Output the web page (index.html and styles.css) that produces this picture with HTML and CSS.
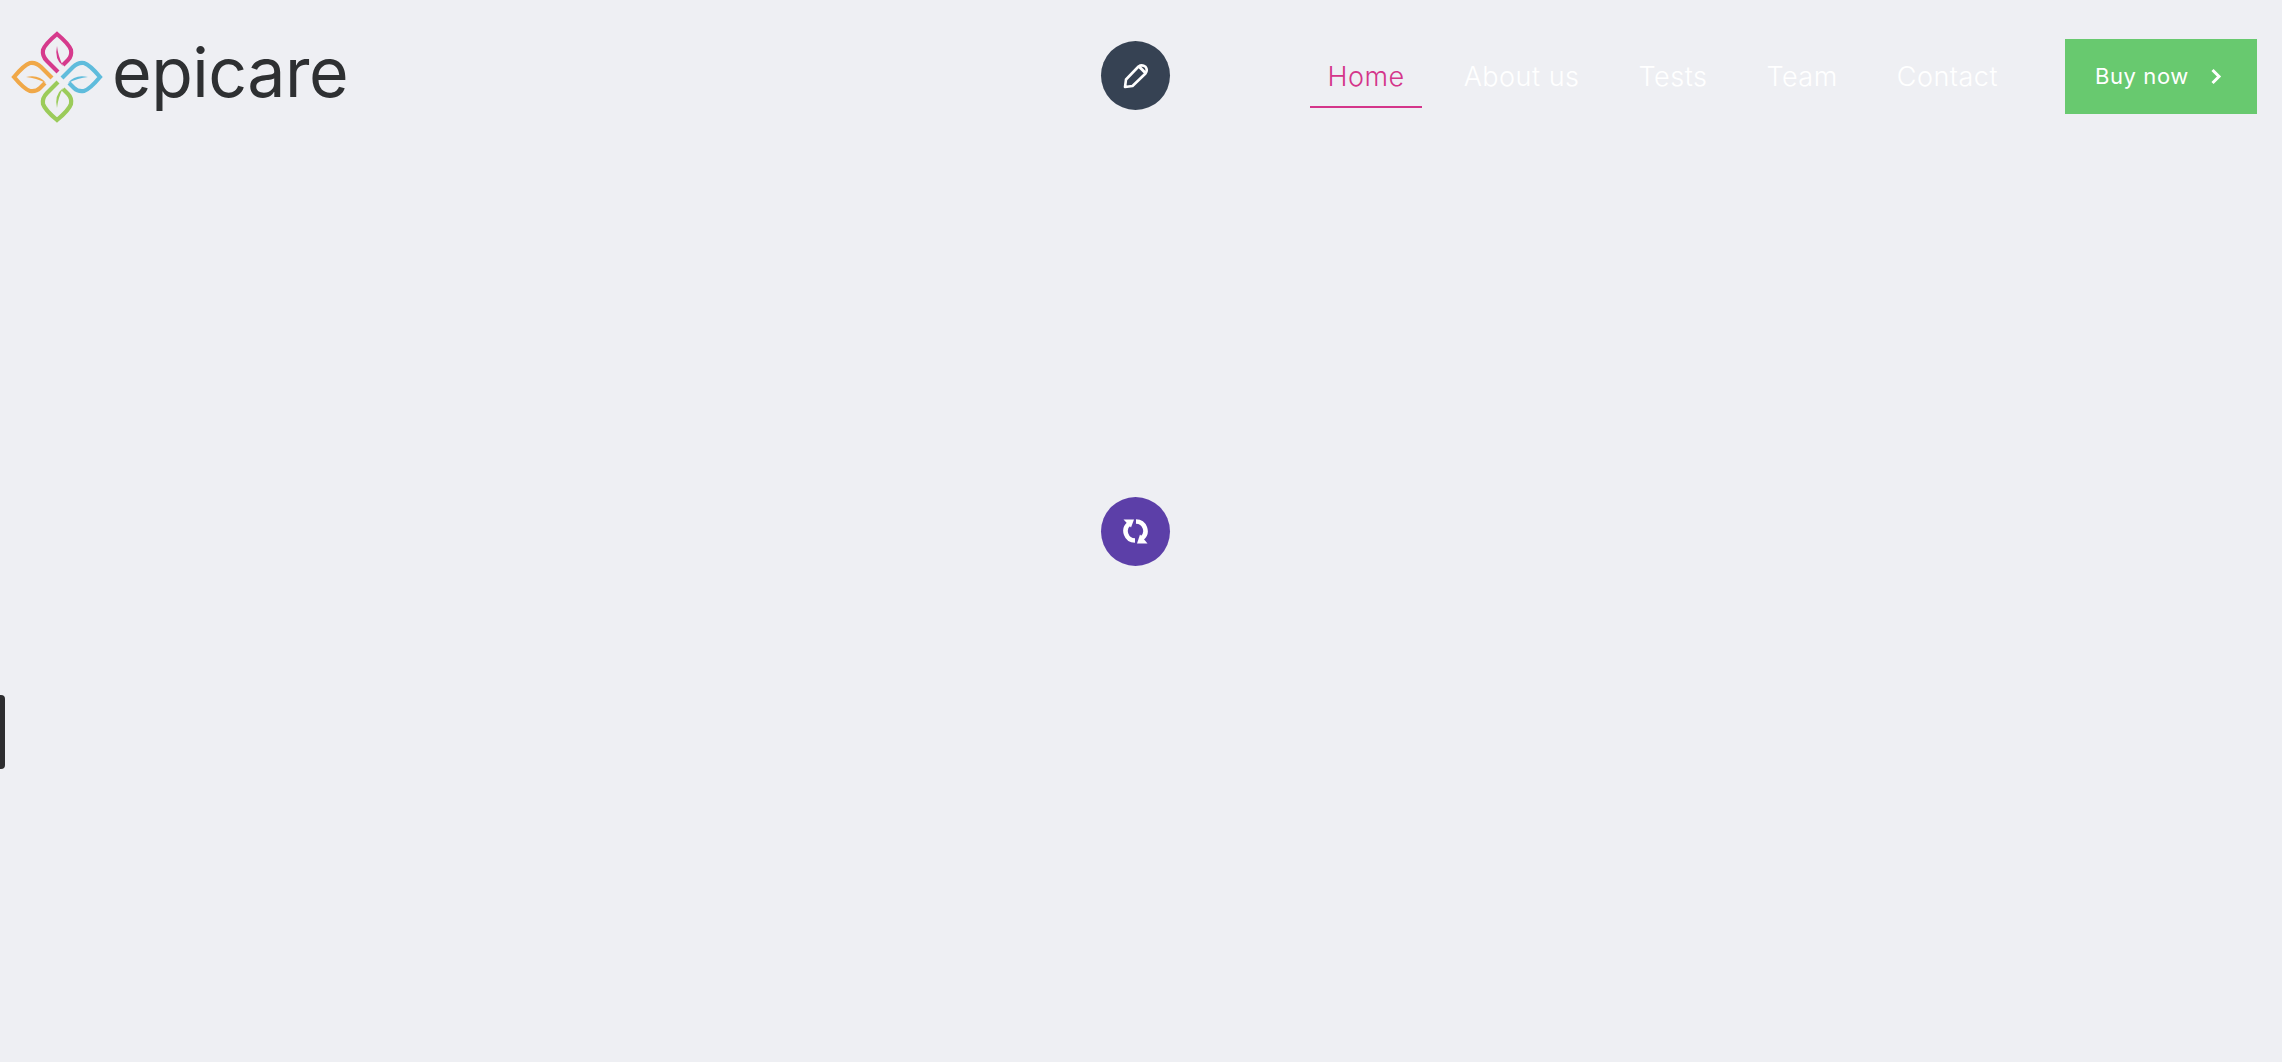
FILE: index.html
```html
<!DOCTYPE html>
<html>
  <head>
    <title>Epicare</title>
    <link rel="stylesheet" href="styles.css">
  </head>

  <body>
    <header class="header">
      <a class="logo" href="#">
        <svg class="logo-mark" viewBox="0 0 100 100" width="100" height="100">
          <defs>
            <g id="leaf">
              <path class="leaf-line" d="M1 -5 L-10 -16 Q-15 -21 -14 -27 Q-12 -33 0 -43 Q12 -33 14 -27 Q15 -21 11 -17 L6 -12"/>
              <path class="leaf-curl" d="M0 -31 Q-3 -18 6 -11 Q1 -21 0 -31 Z"/>
            </g>
          </defs>
          <g transform="translate(50 50)">
            <use href="#leaf" class="leaf-pink"/>
            <use href="#leaf" class="leaf-blue" transform="rotate(90)"/>
            <use href="#leaf" class="leaf-green" transform="scale(1 -1)"/>
            <use href="#leaf" class="leaf-orange" transform="matrix(0 1 1 0 0 0)"/>
          </g>
        </svg>
        <span class="logo-text">epicare</span>
      </a>

      <div class="header-right">
        <nav class="nav">
          <a class="nav-item active" href="#">Home</a>
          <a class="nav-item" href="#">About us</a>
          <a class="nav-item" href="#">Tests</a>
          <a class="nav-item" href="#">Team</a>
          <a class="nav-item" href="#">Contact</a>
        </nav>
        <a class="buy" href="#">
          <span>Buy now</span>
          <svg viewBox="0 0 12 17" width="12" height="17">
            <path d="M2.5 2 L9 8.5 L2.5 15" fill="none" stroke="#fff" stroke-width="3"/>
          </svg>
        </a>
      </div>
    </header>

    <!-- floating buttons -->
    <button class="round round-edit">
      <svg viewBox="0 0 26 26" width="26" height="26">
        <path d="M2 24 L3 16.5 L15.5 3.5 Q19 1 22.5 3.8 Q25 7 22.5 10.5 L9.5 23 Z" fill="none" stroke="#fff" stroke-width="2.6" stroke-linejoin="round"/>
        <path d="M16 3.5 L22.5 10" fill="none" stroke="#fff" stroke-width="3"/>
      </svg>
    </button>
    <button class="round round-reload">
      <svg viewBox="0 0 25 25" width="25" height="25">
        <path d="M12 21.5 A9.5 9.5 0 0 1 6 4.7" fill="none" stroke="#fff" stroke-width="4.6"/>
        <path d="M13 2.5 A9.5 9.5 0 0 1 19 19.3" fill="none" stroke="#fff" stroke-width="4.6"/>
        <path d="M0.5 0.5 H11 L8 8.5 Z" fill="#fff"/>
        <path d="M24.5 24.5 H14 L17 15.5 Z" fill="#fff"/>
      </svg>
    </button>
    <div class="side-handle"></div>
  </body>
</html>
```

FILE: styles.css
```css
body {
  margin: 0;
  height: 1062px;
  overflow: hidden;
  background: #eeeff3;
  font-family: "Inter", "Liberation Sans", sans-serif;
}

a {
  text-decoration: none;
}

.header {
  display: flex;
  justify-content: space-between;
  align-items: center;
  height: 152px;
  padding: 0 25px 0 7px;
}

.logo {
  display: flex;
  align-items: center;
  gap: 5px;
  padding-top: 2px;
}

.logo-mark {
  display: block;
}

.leaf-line {
  fill: none;
  stroke: currentColor;
  stroke-width: 4.2;
}

.leaf-curl {
  fill: currentColor;
  stroke: none;
}

.leaf-pink {
  color: #d63a8c;
}

.leaf-blue {
  color: #5fbcdc;
}

.leaf-green {
  color: #9bcb5a;
}

.leaf-orange {
  color: #f0a848;
}

.logo-text {
  margin-bottom: 10px;
  font-size: 68px;
  font-weight: 400;
  color: #2e3032;
  letter-spacing: -0.5px;
}

.header-right {
  display: flex;
  align-items: center;
  gap: 50px;
}

.nav {
  display: flex;
  gap: 25px;
}

.nav-item {
  padding: 4px 17px 0;
  line-height: 58px;
  font-size: 27px;
  font-weight: 300;
  letter-spacing: 0.5px;
  color: #fff;
  border-bottom: 2px solid transparent;
}

.nav-item.active {
  color: #d4358a;
  border-bottom-color: #d4358a;
}

.buy {
  display: flex;
  align-items: center;
  justify-content: space-between;
  box-sizing: border-box;
  width: 192px;
  height: 75px;
  padding: 0 35px 0 30px;
  background: #68c96f;
  color: #fff;
  font-size: 22px;
  letter-spacing: 0.6px;
}

.round {
  position: absolute;
  left: 1101px;
  width: 69px;
  height: 69px;
  padding: 0;
  border: none;
  border-radius: 50%;
  display: flex;
  align-items: center;
  justify-content: center;
}

.round-edit {
  top: 41px;
  background: #364253;
}

.round-reload {
  top: 497px;
  background: #5c3fa8;
}

.side-handle {
  position: absolute;
  left: 0;
  top: 695px;
  width: 5px;
  height: 74px;
  background: #2d2d2f;
  border-radius: 0 4px 4px 0;
}
```
